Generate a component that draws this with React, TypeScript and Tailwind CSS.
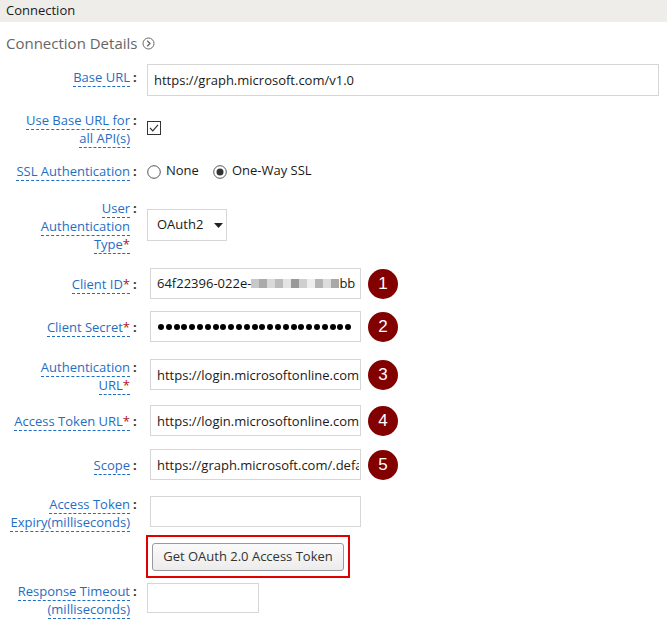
import React from "react";

const Label = ({ lines, req }: { lines: string[]; req?: boolean }) => (
  <div className="w-[130px] text-right leading-[18px] text-[13px] text-[#1f6ec4]">
    {lines.map((l, i) => (
      <React.Fragment key={i}>
        <span className="border-b border-dashed border-[#1f6ec4]">
          {l}
          {req && i === lines.length - 1 ? <span className="text-[#b0112b]">*</span> : null}
        </span>
        {i < lines.length - 1 ? <br /> : null}
      </React.Fragment>
    ))}
  </div>
);

const Colon = () => <div className="w-[17px] pl-[3px] leading-[18px] text-[13px] text-[#333] font-bold">:</div>;

const Badge = ({ n }: { n: number }) => (
  <div className="ml-[7px] w-[30px] h-[30px] rounded-full bg-[#820000] text-white flex items-center justify-center text-[17px] font-['Liberation_Sans',sans-serif]">
    {n}
  </div>
);

const TextBox = ({ value, w = "w-[211px]", h = "h-[31px]" }: { value: string; w?: string; h?: string }) => (
  <input
    readOnly
    value={value}
    className={`${w} ${h} border border-[#d6d6d6] bg-white pl-[6px] pr-[1px] text-[13px] text-[#1a1a1a] font-['Open_Sans',sans-serif] outline-none`}
  />
);

export default function App() {
  const pix = ["#c8c8c8", "#aaa", "#d9d9d9", "#bbb", "#e4e4e4", "#999", "#cfcfcf", "#eee", "#b5b5b5", "#ddd", "#a8a8a8"];
  return (
    <div className="w-[667px] h-[629px] bg-white font-['Open_Sans',sans-serif] overflow-hidden">
      <div className="h-[22px] bg-[#eeedea] flex items-center pl-[6px] text-[13px] text-[#1a1a1a]">Connection</div>
      <div className="mt-[10px] h-[22px] flex items-center pl-[6px] text-[15px] text-[#666]">
        Connection Details
        <svg className="ml-[5px]" width="13" height="13" viewBox="0 0 13 13">
          <circle cx="6.5" cy="6.5" r="5.5" fill="none" stroke="#666" strokeWidth="1" />
          <path d="M5.2 3.8 L8 6.5 L5.2 9.2" fill="none" stroke="#666" strokeWidth="1.3" />
        </svg>
      </div>

      {/* Base URL */}
      <div className="mt-[10px] flex items-start">
        <div className="pt-[4px] flex"><Label lines={["Base URL"]} /><Colon /></div>
        <TextBox value="https://graph.microsoft.com/v1.0" w="w-[512px]" h="h-[32px]" />
      </div>

      {/* Use base url */}
      <div className="mt-[15px] flex items-start">
        <Label lines={["Use Base URL for", "all API(s)"]} />
        <Colon />
        <svg className="mt-[10px]" width="14" height="14" viewBox="0 0 14 14">
          <rect x="0.5" y="0.5" width="13" height="13" fill="white" stroke="#333" />
          <path d="M3 7 L5.8 9.8 L11 3.8" fill="none" stroke="#333" strokeWidth="1.2" />
        </svg>
      </div>

      {/* SSL */}
      <div className="mt-[15px] flex items-start">
        <Label lines={["SSL Authentication"]} />
        <Colon />
        <div className="flex items-center h-[18px] text-[13px] text-[#1a1a1a]">
          <svg width="14" height="14" viewBox="0 0 14 14" className="mt-[2px]">
            <circle cx="7" cy="7" r="6.3" fill="white" stroke="#555" />
          </svg>
          <span className="ml-[5px]">None</span>
          <svg width="14" height="14" viewBox="0 0 14 14" className="ml-[14px] mt-[2px]">
            <circle cx="7" cy="7" r="6.3" fill="white" stroke="#555" />
            <circle cx="7" cy="7" r="3.5" fill="#333" />
          </svg>
          <span className="ml-[5px]">One-Way SSL</span>
        </div>
      </div>

      {/* User Auth Type */}
      <div className="mt-[19px] flex items-start">
        <Label lines={["User", "Authentication", "Type"]} req />
        <Colon />
        <div className="mt-[10px] w-[80px] h-[32px] border border-[#d6d6d6] flex items-center pl-[9px] text-[13px] text-[#1a1a1a]">
          OAuth2
          <svg className="ml-[11px]" width="9" height="5" viewBox="0 0 9 5"><path d="M0 0 L9 0 L4.5 5 Z" fill="#222" /></svg>
        </div>
      </div>

      {/* Client ID */}
      <div className="mt-[15px] flex items-center">
        <div className="flex"><Label lines={["Client ID"]} req /><Colon /></div>
        <div className="ml-[3px] w-[211px] h-[31px] border border-[#d6d6d6] flex items-center pl-[6px] overflow-hidden whitespace-nowrap text-[13px] text-[#1a1a1a]">
          <span className="shrink-0">64f22396-022e-</span>
          <span className="flex shrink-0">
            {pix.map((c, i) => (
              <span key={i} className="inline-block w-[8px] h-[9px]" style={{ background: c }} />
            ))}
          </span>
          <span className="shrink-0">bb</span>
        </div>
        <Badge n={1} />
      </div>

      {/* Client Secret */}
      <div className="mt-[12px] flex items-center">
        <div className="flex"><Label lines={["Client Secret"]} req /><Colon /></div>
        <div className="ml-[3px] w-[211px] h-[31px] border border-[#d6d6d6] flex items-center pl-[7px] gap-[1.8px] overflow-hidden">
          {Array.from({ length: 25 }).map((_, i) => (
            <span key={i} className="inline-block w-[6px] h-[6px] rounded-full bg-black shrink-0" />
          ))}
        </div>
        <Badge n={2} />
      </div>

      {/* Auth URL */}
      <div className="mt-[16px] flex items-start">
        <Label lines={["Authentication", "URL"]} req />
        <Colon />
        <div className="ml-[3px] mt-[1px] flex items-center">
          <TextBox value="https://login.microsoftonline.com/common/oauth2/v2.0/authorize" />
          <Badge n={3} />
        </div>
      </div>

      {/* Access token URL */}
      <div className="mt-[11px] flex items-center">
        <div className="flex"><Label lines={["Access Token URL"]} req /><Colon /></div>
        <div className="ml-[3px] flex items-center">
          <TextBox value="https://login.microsoftonline.com/common/oauth2/v2.0/token" />
          <Badge n={4} />
        </div>
      </div>

      {/* Scope */}
      <div className="mt-[13px] flex items-center">
        <div className="flex"><Label lines={["Scope"]} /><Colon /></div>
        <div className="ml-[3px] flex items-center">
          <TextBox value="https://graph.microsoft.com/.default" />
          <Badge n={5} />
        </div>
      </div>

      {/* Expiry */}
      <div className="mt-[15px] flex items-start">
        <Label lines={["Access Token", "Expiry(milliseconds)"]} />
        <Colon />
        <div className="ml-[3px] mt-[1px]">
          <TextBox value="" h="h-[31px]" />
        </div>
      </div>

      {/* Button */}
      <div className="mt-[4px] ml-[146px] w-[204px] h-[43px] border-2 border-[#e00000] pl-[4px] pt-[6px]">
        <div className="w-[192px] h-[28px] rounded-[3px] border border-[#9a9a9a] bg-gradient-to-b from-[#fafafa] to-[#ececec] flex items-center justify-center text-[13px] text-[#333]">
          Get OAuth 2.0 Access Token
        </div>
      </div>

      {/* Response timeout */}
      <div className="mt-[4px] flex items-start">
        <Label lines={["Response Timeout", "(milliseconds)"]} />
        <Colon />
        <div className="mt-[1px]">
          <TextBox value="" w="w-[112px]" h="h-[30px]" />
        </div>
      </div>
    </div>
  );
}
